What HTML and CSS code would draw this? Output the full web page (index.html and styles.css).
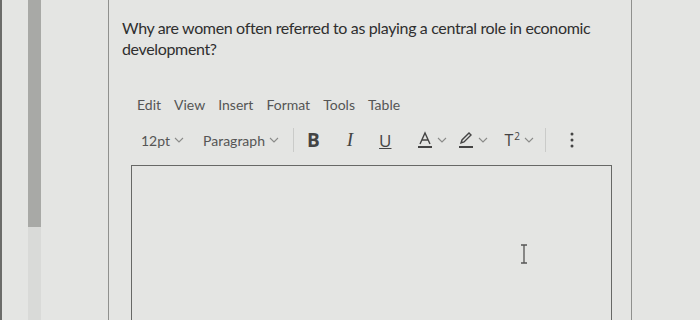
FILE: index.html
```html
<!DOCTYPE html>
<html lang="en">
<head>
  <meta charset="UTF-8">
  <title>Question</title>
  <link rel="stylesheet" href="styles.css">
</head>
<body>

<div class="screen">
  <div class="gutter">
    <div class="scroll-track">
      <div class="scroll-thumb"></div>
    </div>
  </div>

  <div class="question-panel">
    <p class="question-text">Why are women often referred to as playing a central role in economic development?</p>

    <div class="editor-menu">
      <span>Edit</span>
      <span>View</span>
      <span>Insert</span>
      <span>Format</span>
      <span>Tools</span>
      <span>Table</span>
    </div>

    <div class="editor-toolbar">
      <span class="tb-select">12pt <svg class="chev" viewBox="0 0 10 6"><path d="M1 1l4 4 4-4"/></svg></span>
      <span class="tb-select tb-para">Paragraph <svg class="chev" viewBox="0 0 10 6"><path d="M1 1l4 4 4-4"/></svg></span>
      <span class="tb-sep"></span>
      <span class="tb-btn tb-bold">B</span>
      <span class="tb-btn tb-italic">I</span>
      <span class="tb-btn tb-under">U</span>
      <span class="tb-btn tb-color tb-font-color">
        <svg viewBox="0 0 16 18" width="16" height="18"><path d="M3 13L8 2l5 11M5 9h6" fill="none" stroke="#444" stroke-width="1.4"/><rect x="1" y="15" width="14" height="2" fill="#444"/></svg>
        <svg class="chev" viewBox="0 0 10 6"><path d="M1 1l4 4 4-4"/></svg>
      </span>
      <span class="tb-btn tb-color">
        <svg viewBox="0 0 16 18" width="16" height="18"><path d="M3 12l1-3 7-7 2 2-7 7z" fill="none" stroke="#444" stroke-width="1.4"/><rect x="1" y="15" width="14" height="2" fill="#444"/></svg>
        <svg class="chev" viewBox="0 0 10 6"><path d="M1 1l4 4 4-4"/></svg>
      </span>
      <span class="tb-btn tb-sup"><span>T<sup>2</sup></span><svg class="chev" viewBox="0 0 10 6"><path d="M1 1l4 4 4-4"/></svg></span>
      <span class="tb-sep tb-sep-2"></span>
      <span class="tb-more">
        <svg viewBox="0 0 4 16" width="4" height="16"><circle cx="2" cy="2" r="1.5"/><circle cx="2" cy="8" r="1.5"/><circle cx="2" cy="14" r="1.5"/></svg>
      </span>
    </div>

    <div class="editor-body">
      <svg class="ibeam" viewBox="0 0 10 20" width="10" height="20"><path d="M2 1h6M5 1v18M2 19h6" fill="none" stroke="#555" stroke-width="1.3"/></svg>
    </div>
  </div>
</div>

</body>
</html>
```

FILE: styles.css
```css
* {
  margin: 0;
  padding: 0;
  box-sizing: border-box;
}

body {
  width: 700px;
  height: 320px;
  overflow: hidden;
  background-color: #e4e5e3;
  font-family: Lato, "Open Sans", sans-serif;
  color: #333;
}

.screen {
  display: flex;
  height: 320px;
  border-left: 2px solid #6b6c6a;
}

.gutter {
  width: 106px;
  flex-shrink: 0;
  padding-left: 26px;
}

.scroll-track {
  width: 13px;
  height: 100%;
  background-color: #d9dad8;
}

.scroll-thumb {
  height: 227px;
  background-color: #a8a9a6;
}

.question-panel {
  width: 524px;
  height: 320px;
  flex-shrink: 0;
  border-left: 1px solid #8f908e;
  border-right: 1px solid #8f908e;
  padding: 17px 0 0 13px;
  overflow: hidden;
}

.question-text {
  font-size: 16px;
  letter-spacing: -0.35px;
  line-height: 21px;
  color: #2f2f2f;
  width: 490px;
}

.editor-menu {
  display: flex;
  gap: 13px;
  margin: 37px 0 0 15px;
  font-size: 14px;
  color: #555;
}

.editor-toolbar {
  display: flex;
  align-items: center;
  height: 24px;
  margin: 15px 0 0 19px;
  font-size: 14px;
  color: #555;
}

.chev {
  width: 10px;
  height: 6px;
  margin-left: 4px;
  fill: none;
  stroke: #8a8b89;
  stroke-width: 1.1;
}

.tb-select {
  display: flex;
  align-items: center;
  margin-right: 19px;
}

.tb-para {
  margin-right: 14px;
}

.tb-sep {
  width: 1px;
  height: 24px;
  background-color: #cacbc9;
  margin-right: 13px;
}

.tb-btn {
  display: flex;
  align-items: center;
  color: #444;
}

.tb-bold {
  font-family: "Open Sans", sans-serif;
  font-weight: 700;
  font-size: 19px;
  margin-right: 27px;
}

.tb-italic {
  font-family: "Liberation Serif", serif;
  font-style: italic;
  font-size: 19px;
  margin-right: 26px;
}

.tb-under {
  font-family: "Open Sans", sans-serif;
  font-size: 17px;
  text-decoration: underline;
  margin-right: 26px;
}

.tb-color {
  margin-right: 16px;
}

.tb-font-color {
  margin-right: 11px;
}

.tb-sup {
  font-family: "Open Sans", sans-serif;
  font-size: 16px;
  margin-right: 11px;
}

.tb-sup sup {
  font-size: 10px;
  margin-left: 1px;
}

.tb-sep-2 {
  margin-right: 24px;
}

.tb-more svg {
  fill: #444;
  display: block;
}

.editor-body {
  display: flex;
  justify-content: flex-end;
  height: 200px;
  width: 481px;
  margin: 13px 0 0 9px;
  border: 1.5px solid #676866;
  border-bottom: none;
  padding: 78px 82px 0 0;
}
```
